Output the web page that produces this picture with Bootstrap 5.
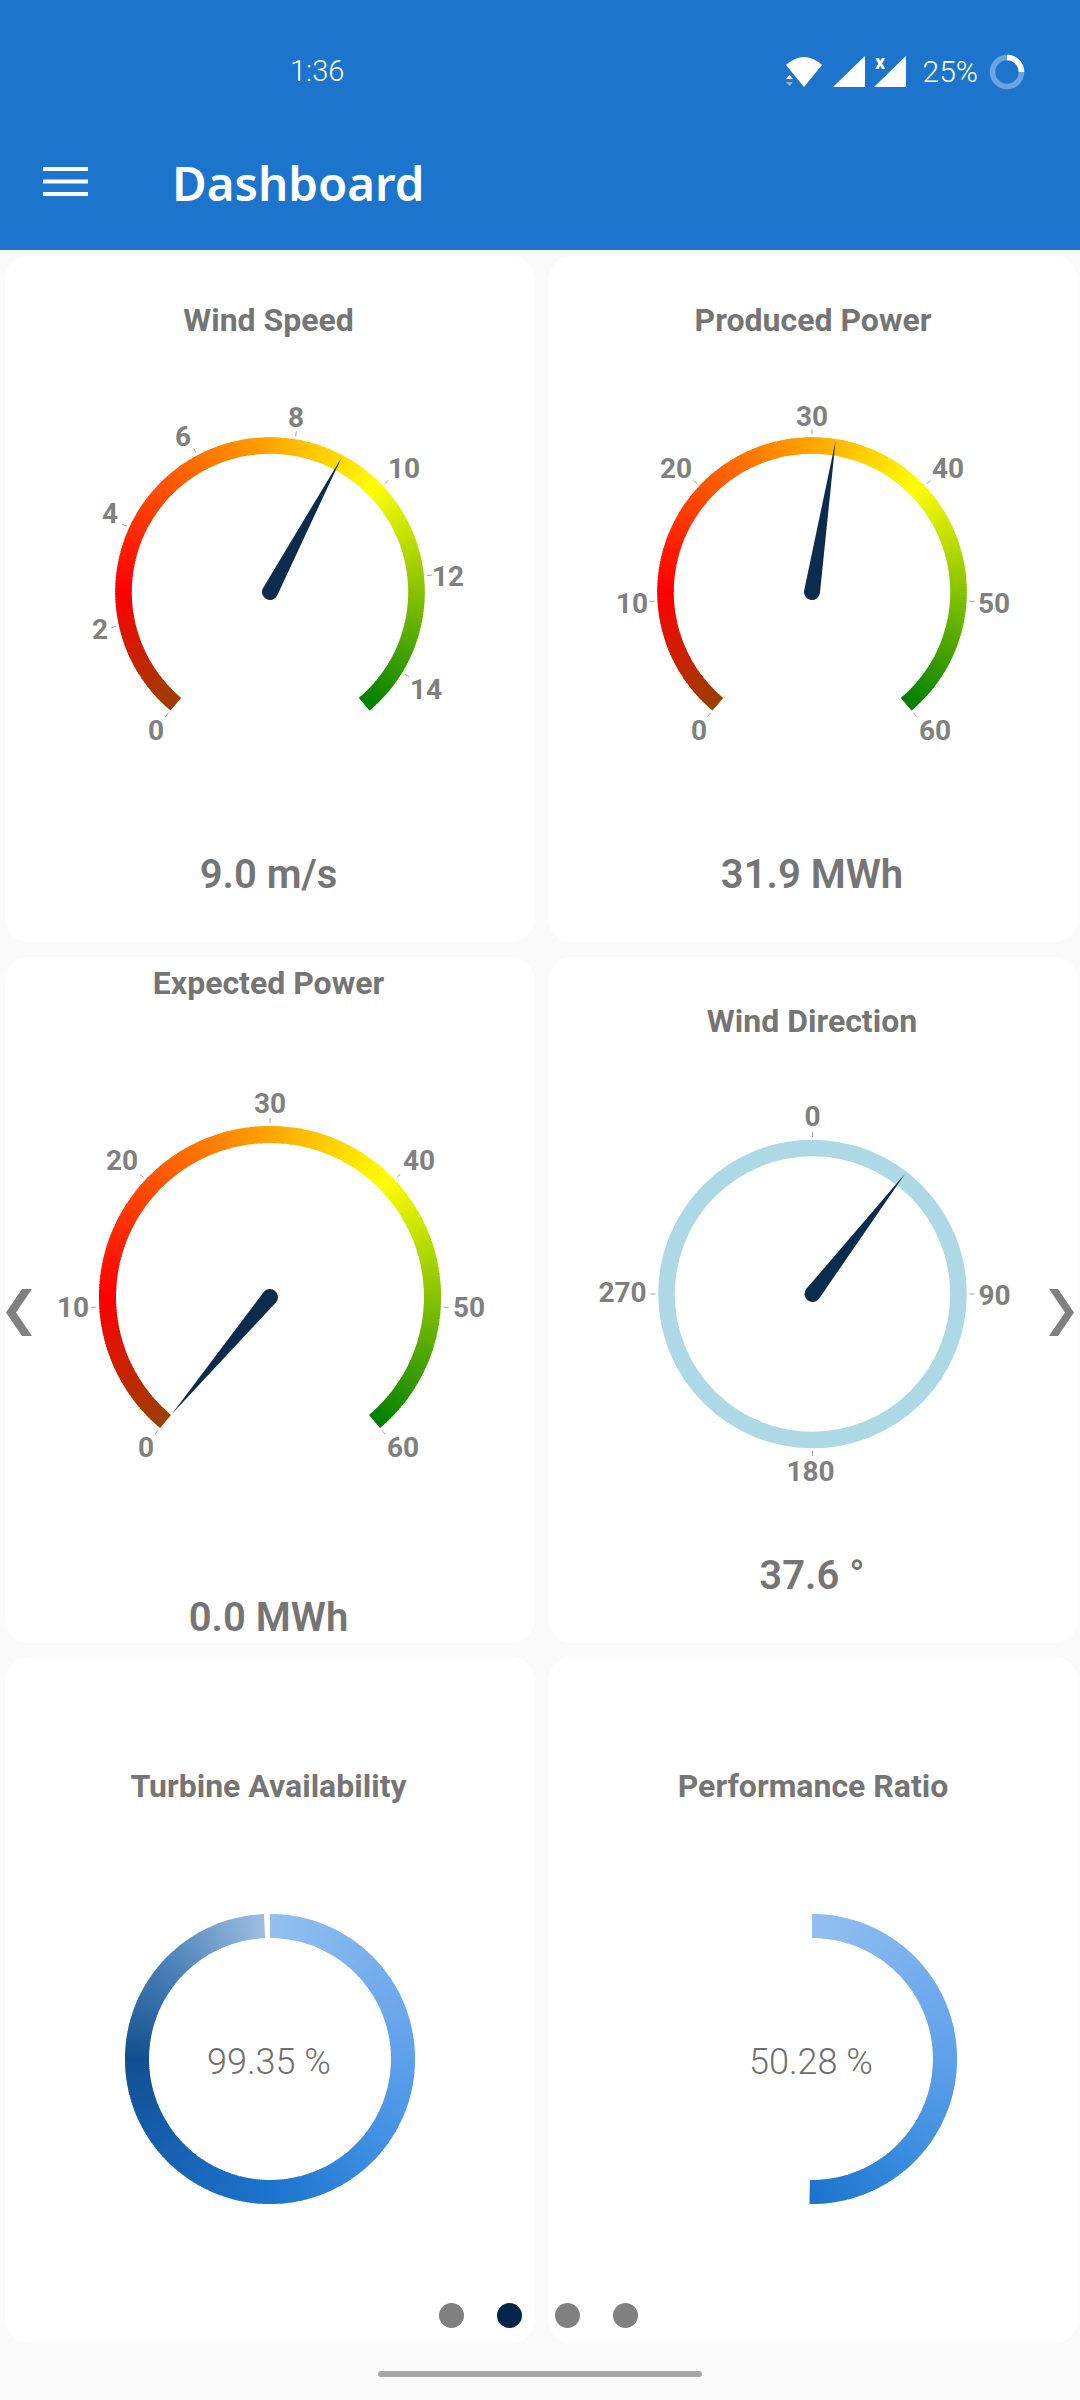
<!DOCTYPE html>
<html lang="en">
<head>
    <meta charset="UTF-8" />
    <meta name="viewport" content="width=device-width, initial-scale=1" />
    <title>Dashboard</title>
    <link rel="stylesheet" href="https://cdn.jsdelivr.net/npm/bootstrap@5.3.0/dist/css/bootstrap.min.css" />
    <style>
        body {
          background-color: #fafafa;
          font-family: Roboto, 'Liberation Sans', sans-serif;
          width: 1080px;
          height: 2400px;
          overflow: hidden;
          position: relative;
        }

        .app-header {
          background-color: #1c74cc;
          height: 250px;
          color: #fff;
        }

        .status-row {
          height: 143px;
          padding-top: 54px;
          font-weight: 300;
          line-height: 36px;
        }

        .status-time { margin: -1px 0 0 290px; font-size: 29px; }
        .status-icons { margin-left: auto; margin-right: 55px; height: 36px; font-size: 30px; }
        .status-percent { margin: 0 11px 0 7px; }

        .app-navbar {
          padding: 0 0 0 43px;
          height: 70px;
          margin-top: 4px;
        }

        .menu-icon { width: 46px; height: 30px; }

        .app-title {
          font-family: 'Noto Sans', Roboto, sans-serif;
          font-size: 47.5px;
          font-weight: 600;
          line-height: 60px;
          margin: 2px 0 0 83px;
          color: #fff;
        }

        .grid-wrap { padding: 6px 2px 0 5px; }
        .gauge-grid { --bs-gutter-x: 13px; --bs-gutter-y: 14.5px; }

        .gauge-card {
          height: 686px;
          border: 0;
          border-radius: 24px;
          background-color: #fff;
          align-items: center;
        }

        .gauge-title {
          font-size: 32px;
          font-weight: 700;
          line-height: 40px;
          margin: var(--title-top) 0 var(--title-gap);
          color: #757575;
          white-space: nowrap;
        }

        .gauge-value {
          font-size: 40px;
          font-weight: 600;
          line-height: 50px;
          margin-top: var(--value-gap);
          color: #757575;
        }

        .nudge-left { padding-right: 3px; }
        .nudge-right-col { padding-right: 2px; }

        .layout-plain { --title-top: 44px; --title-gap: 42px; --value-gap: 48px; }
        .layout-large { --title-top: 6px; --title-gap: 60px; --value-gap: 50px; }
        .layout-donut { --title-top: 109px; --title-gap: 33px; --value-gap: 0; }

        .gauge-svg { display: block; flex: none; }

        .gauge-svg text {
          font-family: Roboto, 'Liberation Sans', sans-serif;
          font-size: 28px;
          font-weight: 700;
          fill: #808080;
          text-anchor: middle;
          dominant-baseline: central;
        }

        .gauge-svg text.donut-text {
          font-size: 36px;
          font-weight: 300;
          fill: #6f6f6f;
        }

        .pager-arrow { position: absolute; top: 1289px; width: 26px; height: 47px; }
        .pager-prev { left: 6px; }
        .pager-next { left: 1049px; }

        .pager-dots { position: absolute; top: 2303px; left: 439px; gap: 33px; }
        .pager-dot { width: 25px; height: 25px; border-radius: 50%; background-color: #808080; }
        .pager-dot.is-active { background-color: #03254a; }

        .home-bar {
          position: absolute;
          top: 2371px;
          left: 378px;
          width: 324px;
          height: 6px;
          border-radius: 3px;
          background-color: #a6a6a6;
        }
    </style>
</head>
<body>

<!-- Header -->
<header class="app-header">
    <div class="status-row d-flex align-items-start">
        <span class="status-time">1:36</span>
        <div class="status-icons d-flex align-items-center">
            <svg width="134" height="48" viewBox="0 -6 134 48" xmlns="http://www.w3.org/2000/svg">
                <path d="M4 11 Q22 -5 40 11 L22 33 Z" fill="#fff"/>
                <path d="M4 25 L7.5 21 L11 25 Z" fill="#fff"/>
                <path d="M4 28 L7.5 32 L11 28 Z" fill="#8db9e6"/>
                <path d="M51 33 L83 2 L83 33 Z" fill="#fff"/>
                <path d="M92 33 L124 2 L124 33 Z" fill="#fff"/>
                <text x="98" y="15" fill="#fff" font-family="Roboto, sans-serif" font-size="20" font-weight="700" text-anchor="middle">x</text>
            </svg>
            <span class="status-percent">25%</span>
            <svg width="36" height="36" viewBox="0 0 36 36" xmlns="http://www.w3.org/2000/svg">
                <circle cx="18" cy="18" r="14.5" fill="none" stroke="#6fa3e0" stroke-width="5.5"/>
                <path d="M18 3.5 A14.5 14.5 0 0 1 32.5 18" fill="none" stroke="#fff" stroke-width="5.5"/>
            </svg>
        </div>
    </div>
    <nav class="navbar app-navbar align-items-center justify-content-start flex-nowrap">
        <svg class="menu-icon" viewBox="0 0 46 30" xmlns="http://www.w3.org/2000/svg">
            <rect x="0" y="0" width="45" height="4" fill="#fff"/>
            <rect x="0" y="12.5" width="45" height="4" fill="#fff"/>
            <rect x="0" y="25" width="45" height="4" fill="#fff"/>
        </svg>
        <h1 class="app-title">Dashboard</h1>
    </nav>
</header>

<!-- Gauges -->
<main class="grid-wrap">
    <div class="row gauge-grid">
        <div class="col-6">
            <div class="card gauge-card layout-plain">
                <div class="gauge-title nudge-left">Wind Speed</div>
                <svg class="gauge-svg" id="windSpeed" width="530" height="420"></svg>
                <div class="gauge-value nudge-left">9.0 m/s</div>
            </div>
        </div>
        <div class="col-6">
            <div class="card gauge-card layout-plain">
                <div class="gauge-title">Produced Power</div>
                <svg class="gauge-svg" id="producedPower" width="530" height="420"></svg>
                <div class="gauge-value nudge-right-col">31.9 MWh</div>
            </div>
        </div>
        <div class="col-6">
            <div class="card gauge-card layout-large">
                <div class="gauge-title nudge-left">Expected Power</div>
                <svg class="gauge-svg" id="expectedPower" width="530" height="480"></svg>
                <div class="gauge-value nudge-left">0.0 MWh</div>
            </div>
        </div>
        <div class="col-6">
            <div class="card gauge-card layout-plain">
                <div class="gauge-title nudge-right-col">Wind Direction</div>
                <svg class="gauge-svg" id="windDirection" width="530" height="420"></svg>
                <div class="gauge-value nudge-right-col">37.6 °</div>
            </div>
        </div>
        <div class="col-6">
            <div class="card gauge-card layout-donut">
                <div class="gauge-title nudge-left">Turbine Availability</div>
                <svg class="gauge-svg" id="availability" width="530" height="400"></svg>
            </div>
        </div>
        <div class="col-6">
            <div class="card gauge-card layout-donut">
                <div class="gauge-title">Performance Ratio</div>
                <svg class="gauge-svg" id="performance" width="530" height="400"></svg>
            </div>
        </div>
    </div>
</main>

<!-- Pager -->
<svg class="pager-arrow pager-prev" viewBox="0 0 26 47" xmlns="http://www.w3.org/2000/svg">
    <path d="M16 0 H26 L10 23.5 L26 47 H16 L0 23.5 Z" fill="#808080"/>
</svg>
<svg class="pager-arrow pager-next" viewBox="0 0 26 47" xmlns="http://www.w3.org/2000/svg">
    <path d="M0 0 H9 L25 23.5 L9 47 H0 L16 23.5 Z" fill="#808080"/>
</svg>
<div class="pager-dots d-flex">
    <span class="pager-dot"></span>
    <span class="pager-dot is-active"></span>
    <span class="pager-dot"></span>
    <span class="pager-dot"></span>
</div>
<div class="home-bar"></div>

<script>
    const NS = "http://www.w3.org/2000/svg";

    function polar(cx, cy, r, deg) {
      const a = (deg - 90) * Math.PI / 180;
      return [cx + r * Math.cos(a), cy + r * Math.sin(a)];
    }

    function add(svg, tag, attrs, text) {
      const el = document.createElementNS(NS, tag);
      Object.keys(attrs).forEach(k => el.setAttribute(k, attrs[k]));
      if (text !== undefined) el.textContent = text;
      svg.appendChild(el);
      return el;
    }

    function mix(stops, t) {
      let i = 0;
      while (i < stops.length - 2 && t > stops[i + 1][0]) i++;
      const a = stops[i], b = stops[i + 1];
      const k = Math.min(1, Math.max(0, (t - a[0]) / (b[0] - a[0])));
      const c = [0, 1, 2].map(n => Math.round(a[1][n] + (b[1][n] - a[1][n]) * k));
      return `rgb(${c[0]},${c[1]},${c[2]})`;
    }

    // angles are degrees clockwise from 12 o'clock
    function gradientArc(svg, cx, cy, r, width, from, to, colorAt) {
      const steps = Math.ceil(to - from);
      const size = (to - from) / steps;
      for (let i = 0; i < steps; i++) {
        const a = from + i * size;
        const b = Math.min(to, a + size * 1.4);
        const p = polar(cx, cy, r, a), q = polar(cx, cy, r, b);
        add(svg, "path", {
          d: `M${p[0]} ${p[1]} A${r} ${r} 0 0 1 ${q[0]} ${q[1]}`,
          fill: "none",
          stroke: colorAt(a + size / 2),
          "stroke-width": width
        });
      }
    }

    function needle(svg, cx, cy, deg, length) {
      const tip = polar(cx, cy, length, deg);
      const l = polar(cx, cy, 8, deg - 90), r = polar(cx, cy, 8, deg + 90);
      add(svg, "path", {
        d: `M${l[0]} ${l[1]} L${tip[0]} ${tip[1]} L${r[0]} ${r[1]} A8 8 0 0 1 ${l[0]} ${l[1]} Z`,
        fill: "#0b2c4d"
      });
    }

    function ticks(svg, cx, cy, r, angles) {
      angles.forEach(deg => {
        const p = polar(cx, cy, r + 3, deg), q = polar(cx, cy, r + 8, deg);
        add(svg, "line", { x1: p[0], y1: p[1], x2: q[0], y2: q[1], stroke: "#a0a0a0", "stroke-width": 1 });
      });
    }

    const speedStops = [
      [0, [153, 64, 0]],
      [0.18, [255, 0, 0]],
      [0.5, [255, 165, 0]],
      [0.66, [255, 255, 0]],
      [1, [0, 128, 0]]
    ];

    const ringStops = [
      [0, [147, 192, 240]],
      [0.25, [95, 160, 234]],
      [0.375, [59, 141, 224]],
      [0.5, [28, 116, 204]],
      [0.625, [23, 99, 180]],
      [0.75, [18, 79, 144]],
      [0.875, [79, 132, 186]],
      [1, [163, 194, 228]]
    ];

    // labels: [text, x, y] measured relative to the gauge centre
    function speedGauge(id, cx, cy, radius, width, max, value, labels) {
      const svg = document.getElementById(id);
      gradientArc(svg, cx, cy, radius, width, -140, 140, a => mix(speedStops, (a + 140) / 280));
      ticks(svg, cx, cy, radius + width / 2, labels.map(l => -140 + 280 * l[0] / max));
      labels.forEach(l => add(svg, "text", { x: cx + l[1], y: cy + l[2] }, l[0]));
      needle(svg, cx, cy, -140 + 280 * value / max, 153);
    }

    function compassGauge(id, cx, cy, radius, value, labels) {
      const svg = document.getElementById(id);
      add(svg, "circle", { cx: cx, cy: cy, r: radius, fill: "none", stroke: "#add8e6", "stroke-width": 16.5 });
      ticks(svg, cx, cy, radius + 8, labels.map(l => l[0]));
      labels.forEach(l => add(svg, "text", { x: cx + l[1], y: cy + l[2] }, l[0]));
      needle(svg, cx, cy, value, 152);
    }

    function donut(id, cx, cy, value) {
      const svg = document.getElementById(id);
      gradientArc(svg, cx, cy, 133, 24, 0, 360 * value / 100, a => mix(ringStops, a / 360));
      add(svg, "text", { x: cx - 1, y: cy + 2.5, class: "donut-text" }, value.toFixed(2) + " %");
    }

    speedGauge("windSpeed", 265, 210, 146.5, 16.5, 15, 9.0, [
      [0, -114, 138], [2, -170, 37], [4, -160, -79], [6, -87, -156],
      [8, 26, -175], [10, 134, -124], [12, 178, -16], [14, 156, 97]
    ]);
    speedGauge("producedPower", 264, 210, 146.5, 16.5, 60, 31.9, [
      [0, -113, 138], [10, -180, 11], [20, -136, -124], [30, 0, -176],
      [40, 136, -124], [50, 182, 11], [60, 123, 138]
    ]);
    speedGauge("expectedPower", 265, 234, 162.5, 17, 60, 0, [
      [0, -124, 150], [10, -197, 10], [20, -148, -137], [30, 0, -194],
      [40, 149, -137], [50, 199, 10], [60, 133, 150]
    ]);
    compassGauge("windDirection", 264.5, 211, 146, 37.6, [
      [0, 0, -178], [90, 182, 1], [180, -2, 177], [270, -190, -2]
    ]);
    donut("availability", 265, 220, 99.35);
    donut("performance", 264, 220, 50.28);
</script>

<script src="https://cdn.jsdelivr.net/npm/bootstrap@5.3.0/dist/js/bootstrap.bundle.min.js"></script>
</body>
</html>
